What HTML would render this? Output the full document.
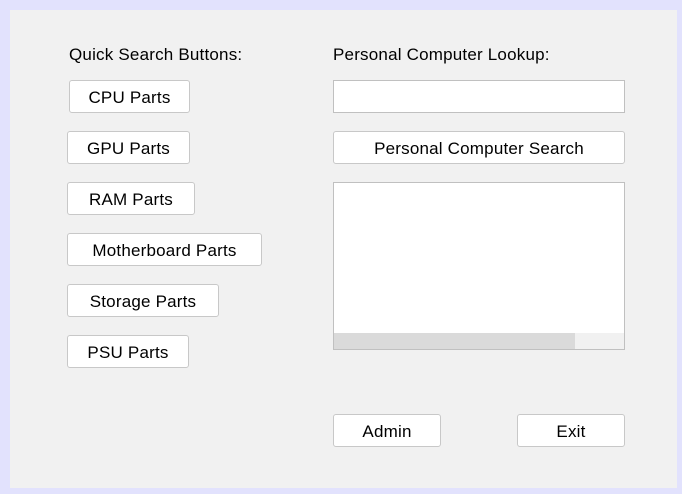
<!DOCTYPE html>
<html><head><style>
body{margin:0;width:693px;height:501px;background:#fff;position:relative;font-family:"Liberation Sans",sans-serif;font-size:17px;letter-spacing:0.2px;color:#000;overflow:hidden}
.frame{position:absolute;left:0;top:0;width:682px;height:494px;background:#e2e2fd}
.panel{position:absolute;left:10px;top:10px;width:667px;height:478px;background:#f1f1f1}
.l{position:absolute;white-space:nowrap}
.b{position:absolute;box-sizing:border-box;background:#fff;border:1px solid #c8c8c8;border-radius:3px;display:flex;align-items:center;justify-content:center;white-space:nowrap;padding-top:2px}
.box{position:absolute;box-sizing:border-box;background:#fff;border:1px solid #c0c0c0}
</style></head><body>
<div class="frame"></div><div class="panel"></div>
<div class="l" style="left:69px;top:45px">Quick Search Buttons:</div>
<div class="l" style="left:333px;top:45px">Personal Computer Lookup:</div>
<div class="b" style="left:69px;top:80px;width:121px;height:33px">CPU Parts</div>
<div class="b" style="left:67px;top:131px;width:123px;height:33px">GPU Parts</div>
<div class="b" style="left:67px;top:182px;width:128px;height:33px">RAM Parts</div>
<div class="b" style="left:67px;top:233px;width:195px;height:33px">Motherboard Parts</div>
<div class="b" style="left:67px;top:284px;width:152px;height:33px">Storage Parts</div>
<div class="b" style="left:67px;top:335px;width:122px;height:33px">PSU Parts</div>
<div class="box" style="left:333px;top:80px;width:292px;height:33px"></div>
<div class="b" style="left:333px;top:131px;width:292px;height:33px">Personal Computer Search</div>
<div class="box" style="left:333px;top:182px;width:292px;height:168px">
<div style="position:absolute;left:0;top:150px;width:290px;height:16px;background:#f1f1f1"></div>
<div style="position:absolute;left:0;top:150px;width:241px;height:16px;background:#dadada"></div>
</div>
<div class="b" style="left:333px;top:414px;width:108px;height:33px">Admin</div>
<div class="b" style="left:517px;top:414px;width:108px;height:33px">Exit</div>
</body></html>
